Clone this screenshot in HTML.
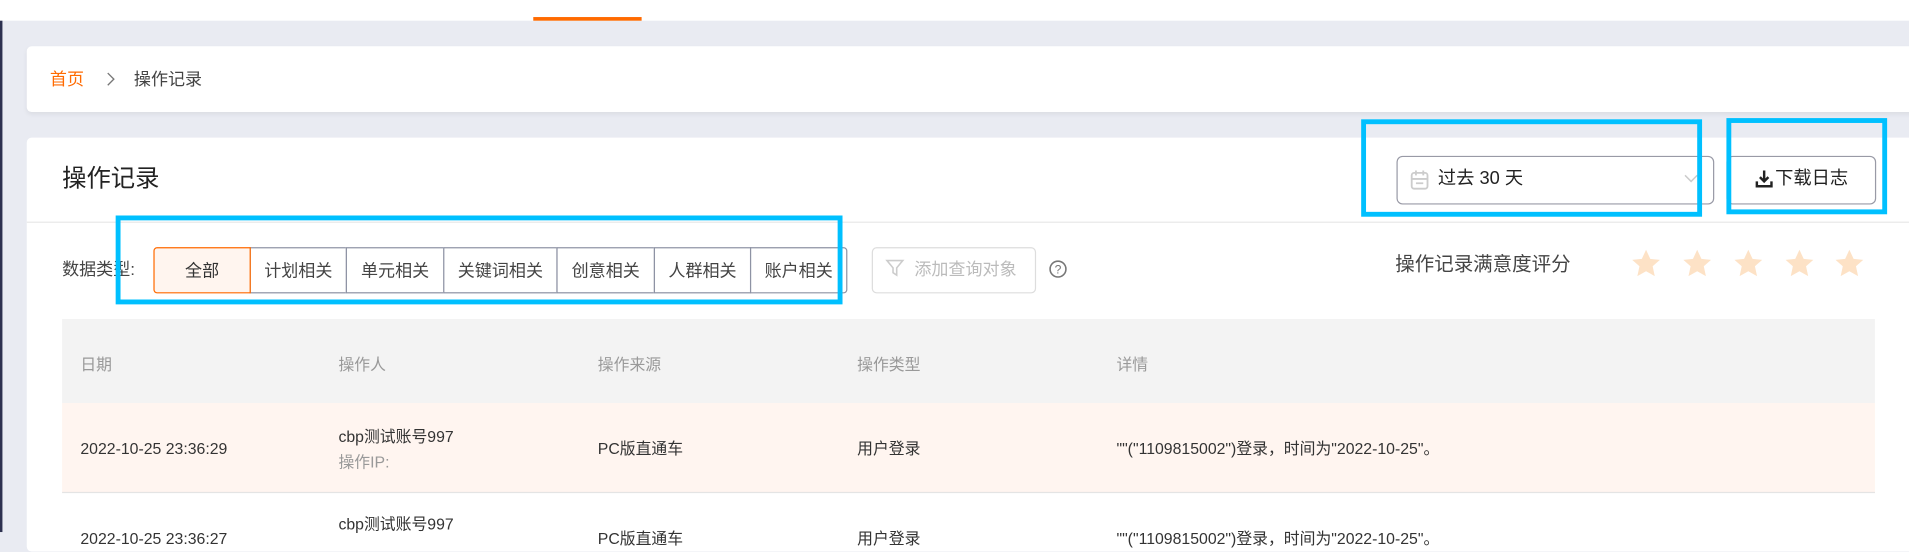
<!DOCTYPE html>
<html><head><meta charset="utf-8"><style>
html,body{margin:0;padding:0;width:1909px;height:532px;overflow:hidden;background:#e9ebf2}
#s{position:absolute;left:0;top:0;width:1568px;height:437px;transform:scale(1.2175);transform-origin:0 0;font-family:"Liberation Sans","Noto Sans CJK SC",sans-serif;color:#333}
.a{position:absolute}
.t{position:absolute;white-space:nowrap;line-height:1}
.seg{position:absolute;top:203px;height:38px;border:1px solid #8e93a4;box-sizing:border-box;font-size:14px;color:#444;display:flex;align-items:center;justify-content:center;background:#fff}
.blue{position:absolute;border:4px solid #00c0ff;box-sizing:border-box}
.star{position:absolute;top:204px;width:26px;height:26px}
.th{top:293px;font-size:13px;color:#999}
.td{font-size:13px;color:#333}
</style></head><body><div id="s">
<div class="a" style="left:0;top:0;width:1568px;height:17px;background:#fff"></div>
<div class="a" style="left:438px;top:14px;width:89px;height:3px;background:#ff6a00"></div>
<div class="a" style="left:0;top:17px;width:2px;height:420px;background:#2d3150"></div>
<div class="a" style="left:22px;top:38px;width:1560px;height:54px;background:#fff;border-radius:4px;box-shadow:0 2px 4px rgba(0,0,0,.06)"></div>
<div class="t" style="left:41px;top:58px;font-size:14px;color:#ff6a00">首页</div>
<svg class="a" style="left:87px;top:59px" width="8" height="12"><path d="M1.5 1l5 5-5 5" fill="none" stroke="#777" stroke-width="1.1"/></svg>
<div class="t" style="left:110px;top:58px;font-size:14px;color:#444">操作记录</div>
<div class="a" style="left:22px;top:113px;width:1560px;height:340px;background:#fff;border-radius:4px"></div>
<div class="t" style="left:51px;top:137px;font-size:20px;color:#222">操作记录</div>
<div class="a" style="left:22px;top:182px;width:1546px;height:1px;background:#e8e8e8"></div>
<div class="a" style="left:1147px;top:128px;width:261px;height:40px;border:1px solid #999aa6;border-radius:5px;box-sizing:border-box"></div>
<svg class="a" style="left:1158px;top:139px" width="16" height="18" viewBox="0 0 16 18"><rect x="1.5" y="3" width="13" height="13" rx="2" fill="none" stroke="#ccc" stroke-width="1.5"/><path d="M5 1v4M11 1v4M1.5 8h13M5 11.5h6" stroke="#ccc" stroke-width="1.5"/></svg>
<div class="t" style="left:1181px;top:139px;font-size:15px;color:#222">过去 30 天</div>
<svg class="a" style="left:1383px;top:143px" width="12" height="8"><path d="M1 1l5 5 5-5" fill="none" stroke="#ccc" stroke-width="1.2"/></svg>
<div class="a" style="left:1418px;top:128px;width:123px;height:40px;border:1px solid #999aa6;border-radius:5px;box-sizing:border-box"></div>
<svg class="a" style="left:1441px;top:139px" width="16" height="16" viewBox="0 0 16 16"><path d="M8 1v9M4.5 6.5L8 10l3.5-3.5M2 10v4h12v-4" fill="none" stroke="#222" stroke-width="2"/></svg>
<div class="t" style="left:1458px;top:139px;font-size:15px;color:#222">下载日志</div>
<div class="t" style="left:51px;top:214px;font-size:14px;color:#444">数据类型:</div>
<div class="seg" style="left:126px;width:80px;border-color:#ff6a00;background:#fff5ef;border-radius:3px 0 0 3px;color:#333;z-index:2">全部</div>
<div class="seg" style="left:205px;width:80px">计划相关</div>
<div class="seg" style="left:284px;width:81px">单元相关</div>
<div class="seg" style="left:364px;width:94px">关键词相关</div>
<div class="seg" style="left:457px;width:81px">创意相关</div>
<div class="seg" style="left:537px;width:80px">人群相关</div>
<div class="seg" style="left:616px;width:80px;border-radius:0 3px 3px 0">账户相关</div>
<div class="a" style="left:716px;top:203px;width:135px;height:38px;border:1px solid #ddd;border-radius:4px;box-sizing:border-box"></div>
<svg class="a" style="left:727px;top:212px" width="16" height="16" viewBox="0 0 16 16"><path d="M1.5 2h13l-5 6v6l-3-2V8z" fill="none" stroke="#ccc" stroke-width="1.3"/></svg>
<div class="t" style="left:751px;top:214px;font-size:14px;color:#bbb">添加查询对象</div>
<svg class="a" style="left:861px;top:213px" width="16" height="16" viewBox="0 0 16 16"><circle cx="8" cy="8" r="6.5" fill="none" stroke="#777" stroke-width="1.3"/><text x="8" y="11.5" font-size="10" text-anchor="middle" fill="#777" font-family="Liberation Sans">?</text></svg>
<div class="t" style="left:1146px;top:210px;font-size:16px;color:#444">操作记录满意度评分</div>
<svg class="star" style="left:1339px" viewBox="0 0 24 24"><path d="M12 1l3.2 7 7.3.7-5.5 4.9 1.6 7.4L12 17.3 5.4 21l1.6-7.4L1.5 8.7 8.8 8z" fill="#fde2c6"/></svg>
<svg class="star" style="left:1381px" viewBox="0 0 24 24"><path d="M12 1l3.2 7 7.3.7-5.5 4.9 1.6 7.4L12 17.3 5.4 21l1.6-7.4L1.5 8.7 8.8 8z" fill="#fde2c6"/></svg>
<svg class="star" style="left:1423px" viewBox="0 0 24 24"><path d="M12 1l3.2 7 7.3.7-5.5 4.9 1.6 7.4L12 17.3 5.4 21l1.6-7.4L1.5 8.7 8.8 8z" fill="#fde2c6"/></svg>
<svg class="star" style="left:1465px" viewBox="0 0 24 24"><path d="M12 1l3.2 7 7.3.7-5.5 4.9 1.6 7.4L12 17.3 5.4 21l1.6-7.4L1.5 8.7 8.8 8z" fill="#fde2c6"/></svg>
<svg class="star" style="left:1506px" viewBox="0 0 24 24"><path d="M12 1l3.2 7 7.3.7-5.5 4.9 1.6 7.4L12 17.3 5.4 21l1.6-7.4L1.5 8.7 8.8 8z" fill="#fde2c6"/></svg>
<div class="a" style="left:51px;top:262px;width:1489px;height:69px;background:#f3f3f3"></div>
<div class="t th" style="left:66px">日期</div>
<div class="t th" style="left:278px">操作人</div>
<div class="t th" style="left:491px">操作来源</div>
<div class="t th" style="left:704px">操作类型</div>
<div class="t th" style="left:917px">详情</div>
<div class="a" style="left:51px;top:331px;width:1489px;height:73px;background:#fff5f0;border-bottom:1px solid #e4e4e4"></div>
<div class="t td" style="left:66px;top:362px">2022-10-25 23:36:29</div>
<div class="t td" style="left:278px;top:352px">cbp测试账号997</div>
<div class="t td" style="left:278px;top:373px;color:#999">操作IP:</div>
<div class="t td" style="left:491px;top:362px">PC版直通车</div>
<div class="t td" style="left:704px;top:362px">用户登录</div>
<div class="t td" style="left:917px;top:362px">""("1109815002")登录，时间为"2022-10-25"。</div>
<div class="t td" style="left:66px;top:436px">2022-10-25 23:36:27</div>
<div class="t td" style="left:278px;top:424px">cbp测试账号997</div>
<div class="t td" style="left:491px;top:436px">PC版直通车</div>
<div class="t td" style="left:704px;top:436px">用户登录</div>
<div class="t td" style="left:917px;top:436px">""("1109815002")登录，时间为"2022-10-25"。</div>
<div class="blue" style="left:95px;top:177px;width:597px;height:73px"></div>
<div class="blue" style="left:1118px;top:98px;width:280px;height:80px"></div>
<div class="blue" style="left:1418px;top:97px;width:132px;height:79px"></div>
</div></body></html>
